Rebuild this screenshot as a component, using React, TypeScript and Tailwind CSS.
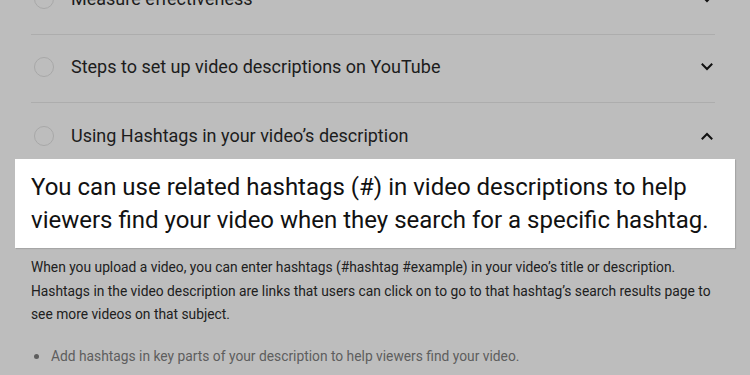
import React from "react";

function Chevron({ up }: { up?: boolean }) {
  return (
    <svg width="14" height="14" viewBox="0 0 14 14" className="shrink-0">
      <path
        d={up ? "M2.5 9.5 L7 5 L11.5 9.5" : "M2.5 4.5 L7 9 L11.5 4.5"}
        fill="none"
        stroke="#111"
        strokeWidth="2"
        strokeLinecap="square"
      />
    </svg>
  );
}

function Row({ title, up, className }: { title: string; up?: boolean; className?: string }) {
  return (
    <div className={"flex items-center pl-[3px] pr-[1px] " + (className ?? "")}>
      <div className="w-[20px] h-[20px] rounded-full border border-[#a8a8a8] shrink-0" />
      <div className="ml-[17px] flex-1 text-[18px] text-[#1c1c1c] leading-none">{title}</div>
      <Chevron up={up} />
    </div>
  );
}

export default function App() {
  return (
    <div
      className="w-[750px] h-[375px] overflow-hidden bg-[#bdbdbd]"
      style={{ fontFamily: "Roboto, 'Noto Sans', sans-serif" }}
    >
      <div className="pl-[31px] pr-[35px]">
        <Row title="Measure effectiveness" className="h-[69px] -mt-[34px] pb-[2px] border-b border-[#adadad]" />
        <Row title="Steps to set up video descriptions on YouTube" className="h-[68px] pb-[3px] border-b border-[#adadad]" />
        <Row title="Using Hashtags in your video’s description" up className="h-[56px] pt-[9px]" />
      </div>
      <div className="mx-[15px] h-[89px] bg-white shadow-[1px_1px_1px_rgba(0,0,0,0.12)] pl-[16px] pr-[10px] pt-[12px] text-[24px] leading-[33px] text-[#111]">
        You can use related hashtags (#) in video descriptions to help viewers find your video when they search for a specific hashtag.
      </div>
      <div className="pl-[31px] pr-[30px] pt-[8px] text-[13.8px] leading-[23.5px] text-[#202020]">
        <p>
          When you upload a video, you can enter hashtags (#hashtag #example) in your video’s title or description.
          Hashtags in the video description are links that users can click on to go to that hashtag’s search results page to
          see more videos on that subject.
        </p>
        <div className="flex items-center mt-[18px] text-[#5e5e5e]">
          <span className="w-[5px] h-[5px] rounded-full bg-[#5e5e5e] ml-[3px] mr-[12px]" />
          <span>Add hashtags in key parts of your description to help viewers find your video.</span>
        </div>
      </div>
    </div>
  );
}
